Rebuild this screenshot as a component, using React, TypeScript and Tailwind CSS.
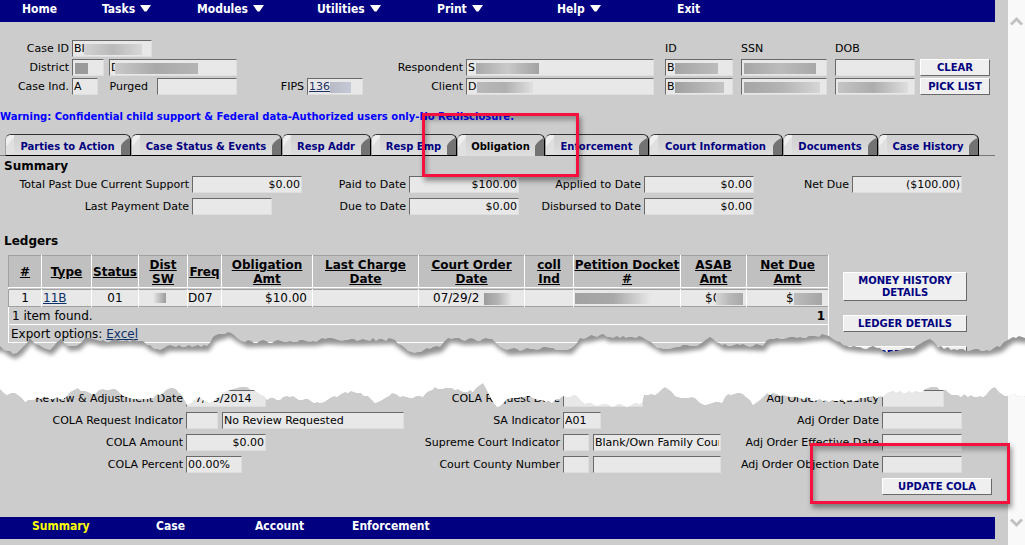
import React from 'react';

/* ---------- form parts ---------- */

type FieldProps = {
  id: string;
  label?: string;
  title?: string;
  value?: string;
  width: string;
  labelWidth?: string;
  right?: boolean;
  link?: boolean;
  mask?: string;
};

function Field({ id, label, title, value = '', width, labelWidth = '', right, link, mask }: FieldProps) {
  return (
    <div className="flex items-center gap-[3px]">
      {label && (
        <label htmlFor={id} className={`shrink-0 whitespace-nowrap text-right ${labelWidth}`}>
          {label}
        </label>
      )}
      <span className={`relative flex shrink-0 ${width}`}>
        <input
          id={id}
          readOnly
          aria-label={label ? undefined : title}
          defaultValue={value}
          className={`h-[17px] w-full min-w-0 border border-b-[#dedede] border-l-[#696969] border-r-[#dedede] border-t-[#696969] bg-[#e8e8e8] px-px outline-none ${
            right ? 'text-right' : ''
          } ${link ? 'text-[#1c2f66] underline' : ''}`}
        />
        {mask && <span className={`absolute top-1 h-[11px] ${mask}`} />}
      </span>
    </div>
  );
}

function PushButton({ children, className = '' }: { children: React.ReactNode; className?: string }) {
  return (
    <button
      type="button"
      className={`shrink-0 border border-b-[#696969] border-l-white border-r-[#696969] border-t-white bg-[#efefef] text-center text-[10px] font-bold leading-[12px] text-[#000080] ${className}`}
    >
      {children}
    </button>
  );
}

/* ---------- navigation ---------- */

const menu = [
  { name: 'Home', width: 'w-20', arrow: false },
  { name: 'Tasks', width: 'w-[95px]', arrow: true },
  { name: 'Modules', width: 'w-[120px]', arrow: true },
  { name: 'Utilities', width: 'w-[120px]', arrow: true },
  { name: 'Print', width: 'w-[120px]', arrow: true },
  { name: 'Help', width: 'w-[120px]', arrow: true },
  { name: 'Exit', width: 'w-[120px]', arrow: false },
];

const footer = [
  { name: 'Summary', width: 'w-[124px]', color: 'text-[#ffff00]' },
  { name: 'Case', width: 'w-[99px]', color: 'text-white' },
  { name: 'Account', width: 'w-[97px]', color: 'text-white' },
  { name: 'Enforcement', width: 'w-[120px]', color: 'text-white' },
];

const tabs = [
  { name: 'Parties to Action', width: 'w-[126px]' },
  { name: 'Case Status & Events', width: 'w-[151px]' },
  { name: 'Resp Addr', width: 'w-[89px]' },
  { name: 'Resp Emp', width: 'w-[86px]' },
  { name: 'Obligation', width: 'w-[88px]' },
  { name: 'Enforcement', width: 'w-[104px]' },
  { name: 'Court Information', width: 'w-[134px]' },
  { name: 'Documents', width: 'w-[95px]' },
  { name: 'Case History', width: 'w-[101px]' },
];

function Tab({ name, width, active }: { name: string; width: string; active: boolean }) {
  return (
    <button
      type="button"
      role="tab"
      aria-selected={active}
      className={`flex h-[22px] shrink-0 overflow-hidden rounded-t-[6px] border-l border-r border-t border-l-[#a0a0a0] border-r-black border-t-[#333333] bg-linear-to-b from-[#cfcfcf] to-[#dedede] ${
        active ? '' : 'border-b border-b-black'
      } ${width}`}
    >
      <svg className="h-full w-2 shrink-0" viewBox="0 0 8 20" preserveAspectRatio="none" aria-hidden="true">
        <path d="M0 0H8V3L3 9L0 12Z" fill="#efefef" />
        <path d="M0 12L3 8L8 2V20H0Z" fill="#e0e0e0" />
      </svg>
      <span
        className={`flex-1 whitespace-nowrap pt-[5px] text-center text-[10px] font-bold leading-[13px] ${
          active ? 'text-black' : 'text-[#000080]'
        }`}
      >
        {name}
      </span>
      <svg className="h-full w-[9px] shrink-0" viewBox="0 0 9 20" preserveAspectRatio="none" aria-hidden="true">
        <path d="M0 20V11Q1 7 8 3L9 4V20Z" fill="#737373" />
      </svg>
    </button>
  );
}

/* ---------- torn paper band ---------- */

type Point = [number, number];

const upperTear: Point[] = [
  [0, 346], [7, 351], [13, 354], [20, 350], [30, 338], [35, 344], [42, 347], [50, 350], [61, 339], [68, 346], [78, 345],
  [85, 338], [93, 339], [100, 341], [127, 340], [143, 341], [147, 345], [160, 350], [167, 346], [207, 346], [213, 337],
  [228, 332], [237, 338], [245, 342], [290, 341], [313, 341], [325, 339], [345, 340], [360, 340], [392, 339], [398, 344],
  [408, 351], [418, 352], [430, 349], [440, 347], [448, 338], [455, 338], [462, 340], [492, 339], [497, 344], [507, 350],
  [530, 349], [553, 348], [570, 349], [580, 338], [588, 337], [603, 334], [607, 337], [642, 337], [648, 341], [660, 348],
  [680, 347], [700, 344], [710, 337], [722, 345], [740, 345], [763, 346], [767, 340], [777, 338], [797, 338], [812, 336],
  [825, 335], [833, 339], [843, 345], [857, 347], [880, 348], [883, 351], [893, 351], [913, 349], [930, 339], [938, 347],
  [957, 350], [987, 350], [1000, 347], [1008, 340], [1013, 337], [1025, 338],
];

const lowerTear: Point[] = [
  [0, 389], [7, 395], [15, 393], [25, 402], [37, 397], [63, 399], [70, 392], [78, 388], [88, 392], [95, 394], [103, 389],
  [115, 389], [127, 397], [147, 399], [163, 393], [173, 388], [182, 395], [187, 405], [200, 397], [210, 403], [220, 397],
  [230, 390], [247, 387], [258, 393], [267, 400], [290, 397], [317, 402], [337, 397], [345, 392], [357, 393], [368, 396],
  [375, 403], [392, 393], [400, 397], [423, 397], [435, 387], [455, 390], [473, 392], [483, 383], [488, 392], [497, 407],
  [510, 398], [527, 396], [533, 398], [552, 403], [563, 396], [577, 396], [585, 404], [630, 406], [642, 403], [644, 395],
  [655, 395], [665, 387], [675, 396], [695, 398], [702, 404], [722, 403], [728, 394], [743, 394], [753, 405], [767, 393],
  [783, 395], [797, 397], [823, 401], [857, 400], [867, 397], [883, 397], [890, 392], [922, 392], [925, 389], [937, 387],
  [952, 395], [983, 397], [995, 387], [1002, 394], [1025, 396],
];

/* Adds small, repeatable steps between the main points of an edge. */
function roughen(points: Point[]): Point[] {
  const result: Point[] = [];
  points.forEach(([x, y], i) => {
    result.push([x, y]);
    const next = points[i + 1];
    if (!next) return;
    const steps = Math.floor((next[0] - x) / 3);
    for (let s = 1; s < steps; s++) {
      const t = s / steps;
      const px = x + (next[0] - x) * t;
      const noise = Math.sin(px * 12.9898) * 1.5;
      result.push([Math.round(px), Math.round(y + (next[1] - y) * t + noise)]);
    }
  });
  return result;
}

const toPath = (points: Point[]) => points.map((p) => p.join(' ')).join(' L');
const bandPath = `M${toPath(roughen(upperTear))} L${toPath(roughen(lowerTear).reverse())} Z`;
const lightPath = `M-20 352 L${toPath(upperTear)} L1045 338 L1045 440 L-20 440 Z`;

function TornBand() {
  return (
    <svg
      className="pointer-events-none absolute left-0 top-[330px] h-20 w-full"
      viewBox="0 330 1025 80"
      preserveAspectRatio="none"
      aria-hidden="true"
    >
      <defs>
        <clipPath id="band">
          <path d={bandPath} />
        </clipPath>
        <filter id="soft" x="-5%" y="-20%" width="110%" height="140%">
          <feGaussianBlur stdDeviation="2.2" />
        </filter>
      </defs>
      <g clipPath="url(#band)">
        <rect x="0" y="330" width="1025" height="80" fill="#949494" />
        <path d={lightPath} transform="translate(2 5)" fill="#ffffff" filter="url(#soft)" />
        <rect x="0" y="366" width="1025" height="50" fill="#ffffff" />
      </g>
    </svg>
  );
}

/* ---------- ledger table ---------- */

const columns: { lines: string[]; width: string }[] = [
  { lines: ['#'], width: 'w-[33px]' },
  { lines: ['Type'], width: 'w-[50px]' },
  { lines: ['Status'], width: 'w-[47px]' },
  { lines: ['Dist', 'SW'], width: 'w-[49px]' },
  { lines: ['Freq'], width: 'w-[34px]' },
  { lines: ['Obligation', 'Amt'], width: 'w-[91px]' },
  { lines: ['Last Charge', 'Date'], width: 'w-[106px]' },
  { lines: ['Court Order', 'Date'], width: 'w-[106px]' },
  { lines: ['coll', 'Ind'], width: 'w-[49px]' },
  { lines: ['Petition Docket', '#'], width: 'w-[107px]' },
  { lines: ['ASAB', 'Amt'], width: 'w-[66px]' },
  { lines: ['Net Due', 'Amt'], width: 'w-[82px]' },
];

const cell = 'relative border-l border-r border-t border-l-[#a0a0a0] border-r-white border-t-[#a0a0a0] bg-[#e8e8e8] p-0';

function LedgerTable() {
  return (
    <table className="w-[821px] shrink-0 table-fixed border-collapse self-start border-l border-r border-white text-[12px] leading-[14px]">
      <thead>
        <tr className="h-8">
          {columns.map((c) => (
            <th
              key={c.lines.join(' ')}
              scope="col"
              className={`border border-b-white border-l-[#a0a0a0] border-r-white border-t-[#a0a0a0] bg-[#c0c0c0] p-0 text-center font-bold ${c.width}`}
            >
              <button type="button" className="whitespace-nowrap font-bold underline">
                {c.lines.map((line) => (
                  <span key={line} className="block underline">
                    {line}
                  </span>
                ))}
              </button>
            </th>
          ))}
        </tr>
      </thead>
      <tbody>
        <tr className="h-0.5">
          <td colSpan={12} className="p-0" />
        </tr>
        <tr className="h-[17px]">
          <td className={`${cell} text-center`}>1</td>
          <td className={`${cell} pl-px`}>
            <a href="#11B" className="text-[#0b3069] underline">
              11B
            </a>
          </td>
          <td className={`${cell} text-center`}>01</td>
          <td className={cell}>
            <span className="absolute left-[15px] top-[3px] h-[10px] w-3 bg-linear-to-r from-[#e0e0e0] to-[#9c9c9c]" />
          </td>
          <td className={cell}>D07</td>
          <td className={`${cell} pr-[5px] text-right`}>$10.00</td>
          <td className={cell} />
          <td className={`${cell} pl-[14px]`}>
            07/29/2
            <span className="absolute left-[65px] top-[3px] h-3 w-7 bg-linear-to-r from-[#9c9c9c] via-[#b4b4b4] to-[#e8e8e8]" />
          </td>
          <td className={cell} />
          <td className={cell}>
            <span className="absolute left-px top-[3px] h-[11px] w-[76px] bg-linear-to-r from-[#a2a2a2] via-[#a8a8a8] to-[#e8e8e8]" />
          </td>
          <td className={`${cell} pl-6`}>
            $0
            <span className="absolute left-[35px] top-[3px] h-3 w-[27px] bg-linear-to-r from-[#d6d6d6] via-[#b8b8b8] to-[#a9a9a9]" />
          </td>
          <td className={`${cell} pl-[39px]`}>
            $
            <span className="absolute left-[47px] top-[3px] h-3 w-7 bg-linear-to-r from-[#bdbdbd] to-[#a4a4a4]" />
          </td>
        </tr>
        <tr className="h-[18px] border-b border-t border-b-white border-t-[#a0a0a0]">
          <td colSpan={12} className="p-0">
            <div className="flex justify-between px-[3px]">
              <span>1 item found.</span>
              <b>1</b>
            </div>
          </td>
        </tr>
        <tr className="h-[18px] border-b border-b-white">
          <td colSpan={12} className="py-0 pl-[2px] pr-0">
            Export options:{' '}
            <a href="#excel" className="text-[#0b3069] underline">
              Excel
            </a>
          </td>
        </tr>
      </tbody>
    </table>
  );
}

/* ---------- page ---------- */

const callout =
  'pointer-events-none absolute border-[3px] border-[#f5103f] shadow-[2px_4px_5px_rgba(0,0,0,0.4),inset_2px_4px_5px_rgba(0,0,0,0.3)]';

export default function App() {
  return (
    <div className="relative flex min-h-screen overflow-hidden bg-[#cccccc] font-['DejaVu_Sans',Verdana,sans-serif] text-[11px] leading-[14px] text-black">
      <main className="min-w-0 flex-1">
        <div className="mr-[13px]">
          <nav className="flex h-[22px] bg-[#000080] pl-[22px] font-['DejaVu_Sans_Condensed',Tahoma,sans-serif] text-[12px] font-bold leading-[19px] text-white">
            {menu.map((m) => (
              <a key={m.name} href={`#${m.name}`} className={`flex shrink-0 gap-[5px] ${m.width}`}>
                {m.name}
                {m.arrow && (
                  <svg className="mt-[5px] h-[7px] w-[11px]" viewBox="0 0 11 7" aria-hidden="true">
                    <path d="M0 0H11L6.5 6.5H4.5Z" fill="#ffffff" />
                  </svg>
                )}
              </a>
            ))}
          </nav>

          <section className="flex pt-[18px]">
            <div className="flex shrink-0 flex-col gap-0.5">
              <Field id="case-id" label="Case ID" labelWidth="w-[69px]" value="BI" width="w-20" mask="left-3 w-[58px] bg-linear-to-r from-[#d2d2d2] via-[#b9b9b9] to-[#d8d8d8]" />
              <div className="flex gap-[5px]">
                <Field id="district" label="District" labelWidth="w-[69px]" width="w-8" mask="left-[3px] w-[13px] bg-[#9a9a9a]" />
                <Field id="county" title="District name" value="D" width="w-32" mask="left-[6px] w-[83px] bg-linear-to-r from-[#c9c9c9] via-[#a9a9a9] to-[#b5b5b5]" />
              </div>
              <div className="flex">
                <Field id="case-ind" label="Case Ind." labelWidth="w-[69px]" value="A" width="w-[26px]" />
                <Field id="purged" label="Purged" labelWidth="w-14 pr-[6px]" width="w-20" />
                <Field id="fips" label="FIPS" labelWidth="w-[67px]" value="136" link width="w-14" mask="left-[23px] w-[21px] bg-linear-to-r from-[#b8bac6] to-[#c5c8d6]" />
              </div>
            </div>
            <div className="flex shrink-0 flex-col gap-0.5 pt-[19px]">
              <Field id="respondent" label="Respondent" labelWidth="w-[100px]" value="S" width="w-[188px]" mask="left-[10px] w-[63px] bg-linear-to-r from-[#a9a9a9] via-[#c9c9c9] to-[#a2a2a2]" />
              <Field id="client" label="Client" labelWidth="w-[100px]" value="D" width="w-[188px]" mask="left-[11px] w-[56px] bg-linear-to-r from-[#b9b9b9] via-[#b0b0b0] to-[#e0e0e0]" />
            </div>
            <div className="ml-[11px] flex shrink-0 flex-col gap-0.5">
              <span className="h-[17px] pt-[2px]">ID</span>
              <Field id="id-1" title="Respondent ID" value="B" width="w-[68px]" mask="left-[10px] w-[43px] bg-linear-to-r from-[#a5a5a5] to-[#bcbcbc]" />
              <Field id="id-2" title="Client ID" value="B" width="w-[68px]" mask="left-[10px] w-[49px] bg-linear-to-r from-[#a0a0a0] to-[#c4c4c4]" />
            </div>
            <div className="ml-2 flex shrink-0 flex-col gap-0.5">
              <span className="h-[17px] pt-[2px]">SSN</span>
              <Field id="ssn-1" title="Respondent SSN" width="w-[86px]" mask="left-[3px] w-[72px] bg-linear-to-r from-[#a5a5a5] via-[#bcbcbc] to-[#a8a8a8]" />
              <Field id="ssn-2" title="Client SSN" width="w-[86px]" mask="left-[3px] w-[76px] bg-linear-to-r from-[#a5a5a5] via-[#b4b4b4] to-[#d6d6d6]" />
            </div>
            <div className="ml-2 flex shrink-0 flex-col gap-0.5">
              <span className="h-[17px] pt-[2px]">DOB</span>
              <Field id="dob-1" title="Respondent DOB" width="w-20" />
              <Field id="dob-2" title="Client DOB" width="w-20" mask="left-[3px] w-[70px] bg-linear-to-r from-[#c4c4c4] via-[#adadad] to-[#dedede]" />
            </div>
            <div className="ml-[5px] flex shrink-0 flex-col gap-0.5 pt-[19px]">
              <PushButton className="h-[17px] w-[70px]">CLEAR</PushButton>
              <PushButton className="h-[17px] w-[70px]">PICK LIST</PushButton>
            </div>
          </section>

          <p className="whitespace-nowrap pt-[15px] text-[10px] font-bold text-[#0000ff]">
            Warning: Confidential child support &amp; Federal data-Authorized users only-No Redisclosure.
          </p>

          <div className="mt-[10px] flex">
            <div className="w-[5px] border-b border-b-[#777777]" />
            <div role="tablist" className="flex">
              {tabs.map((t) => (
                <Tab key={t.name} name={t.name} width={t.width} active={t.name === 'Obligation'} />
              ))}
            </div>
            <div className="flex-1 border-b border-b-[#777777]" />
          </div>
        </div>

        <h2 className="pl-1 pt-[2px] text-[12px] font-bold leading-4">Summary</h2>
        <section className="mt-[2px] flex items-start">
          <div className="flex shrink-0 flex-col gap-[5px]">
            <Field id="past-due" label="Total Past Due Current Support" labelWidth="w-[189px]" value="$0.00" right width="w-[110px]" />
            <Field id="last-pay" label="Last Payment Date" labelWidth="w-[189px]" width="w-20" />
          </div>
          <div className="flex shrink-0 flex-col gap-[5px]">
            <Field id="paid" label="Paid to Date" labelWidth="w-[104px]" value="$100.00" right width="w-[110px]" />
            <Field id="due" label="Due to Date" labelWidth="w-[104px]" value="$0.00" right width="w-[110px]" />
          </div>
          <div className="flex shrink-0 flex-col gap-[5px]">
            <Field id="applied" label="Applied to Date" labelWidth="w-[122px]" value="$0.00" right width="w-[110px]" />
            <Field id="disbursed" label="Disbursed to Date" labelWidth="w-[122px]" value="$0.00" right width="w-[110px]" />
          </div>
          <Field id="net-due" label="Net Due" labelWidth="w-[95px]" value="($100.00)" right width="w-[110px]" />
        </section>

        <h2 className="mt-[18px] pl-1 text-[12px] font-bold leading-4">Ledgers</h2>
        <section className="mt-[6px] flex h-[109px] overflow-hidden pl-2">
          <LedgerTable />
          <div className="ml-[14px] flex shrink-0 flex-col gap-[14px] pt-[17px]">
            <PushButton className="h-[29px] w-[124px] px-2">MONEY HISTORY DETAILS</PushButton>
            <PushButton className="h-[17px] w-[124px]">LEDGER DETAILS</PushButton>
            <PushButton className="h-[17px] w-[124px]">REPORTS</PushButton>
          </div>
        </section>

        <section className="mt-[26px] flex">
          <div className="flex shrink-0 flex-col gap-[5px]">
            <Field id="review-date" label="Review & Adjustment Date" labelWidth="w-[183px]" value="07/29/2014" width="w-20" />
            <div className="flex gap-1">
              <Field id="cola-ind" label="COLA Request Indicator" labelWidth="w-[183px]" width="w-8" />
              <Field id="cola-text" title="COLA request description" value="No Review Requested" width="w-[182px]" />
            </div>
            <Field id="cola-amt" label="COLA Amount" labelWidth="w-[183px]" value="$0.00" right width="w-20" />
            <Field id="cola-pct" label="COLA Percent" labelWidth="w-[183px]" value="00.00%" width="w-14" />
          </div>
          <div className="flex shrink-0 flex-col gap-[5px]">
            <Field id="cola-date" label="COLA Request Date" labelWidth="w-[156px]" width="w-20" />
            <Field id="sa-ind" label="SA Indicator" labelWidth="w-[156px]" value="A01" width="w-[38px]" />
            <div className="flex gap-1">
              <Field id="sc-ind" label="Supreme Court Indicator" labelWidth="w-[156px]" width="w-[26px]" />
              <Field id="sc-text" title="Supreme court description" value="Blank/Own Family Court" width="w-32" />
            </div>
            <div className="flex gap-1">
              <Field id="county-no" label="Court County Number" labelWidth="w-[156px]" width="w-[26px]" />
              <Field id="county-text" title="Court county name" width="w-32" />
            </div>
          </div>
          <div className="flex shrink-0 flex-col gap-[5px]">
            <Field id="adj-freq" label="Adj Order Frequency" labelWidth="w-[158px]" width="w-[62px]" />
            <Field id="adj-date" label="Adj Order Date" labelWidth="w-[158px]" width="w-20" />
            <Field id="adj-eff" label="Adj Order Effective Date" labelWidth="w-[158px]" width="w-20" />
            <Field id="adj-obj" label="Adj Order Objection Date" labelWidth="w-[158px]" width="w-20" />
            <div className="flex pl-[161px]">
              <PushButton className="h-[17px] w-[110px]">UPDATE COLA</PushButton>
            </div>
          </div>
        </section>

        <nav className="mr-[13px] mt-[22px] flex h-[22px] bg-[#000080] pl-8 font-['DejaVu_Sans_Condensed',Tahoma,sans-serif] text-[12px] font-bold leading-[19px]">
          {footer.map((f) => (
            <a key={f.name} href={`#${f.name}`} className={`shrink-0 ${f.width} ${f.color}`}>
              {f.name}
            </a>
          ))}
        </nav>
      </main>

      <aside aria-label="Scroll bar" className="flex w-[17px] shrink-0 flex-col items-center justify-between bg-[#f9f9f9] pb-[17px] pt-4">
        <svg className="h-[10px] w-[13px]" viewBox="0 0 13 10" aria-hidden="true">
          <path d="M1 8.5L6.5 3L12 8.5" fill="none" stroke="#c1c1c1" strokeWidth="3" />
        </svg>
        <svg className="h-[10px] w-[13px]" viewBox="0 0 13 10" aria-hidden="true">
          <path d="M1 1.5L6.5 7L12 1.5" fill="none" stroke="#c1c1c1" strokeWidth="3" />
        </svg>
      </aside>

      <TornBand />
      <div className={`${callout} left-[422px] top-[113px] h-16 w-[157px]`} />
      <div className={`${callout} left-[810px] top-[443px] h-[61px] w-[200px]`} />
    </div>
  );
}
